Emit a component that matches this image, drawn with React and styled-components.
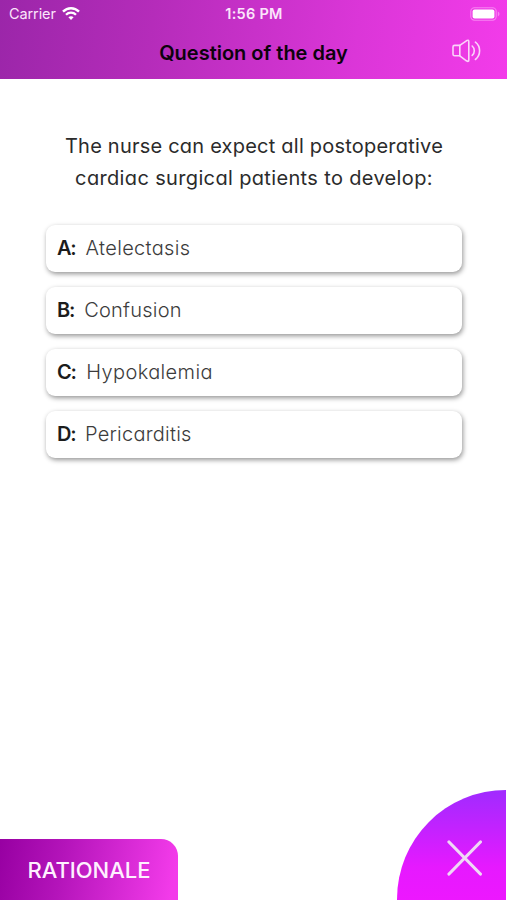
import React from "react";
import styled, { createGlobalStyle } from "styled-components";

const options = [
  { letter: "A", text: "Atelectasis", gap: 10, spacing: 0.34 },
  { letter: "B", text: "Confusion", gap: 10, spacing: 0.25 },
  { letter: "C", text: "Hypokalemia", gap: 10.5, spacing: 0.38 },
  { letter: "D", text: "Pericarditis", gap: 9.5, spacing: 0.24 },
];

const App = () => {
  return (
    <Screen>
      <GlobalStyle />
      <Header>
        <StatusBar>
          <Carrier>
            Carrier
            <WifiIcon />
          </Carrier>
          <Time>1:56 PM</Time>
          <BatteryIcon />
        </StatusBar>
        <NavBar>
          <Title>Question of the day</Title>
          <IconButton aria-label="Read aloud">
            <SpeakerIcon />
          </IconButton>
        </NavBar>
      </Header>
      <Main>
        <Question>
          <Line $spacing={0.22}>The nurse can expect all postoperative</Line>
          <Line $spacing={0.35}>cardiac surgical patients to develop:</Line>
        </Question>
        <Options>
          {options.map((option) => (
            <Option key={option.letter}>
              <Letter $gap={option.gap}>{option.letter}:</Letter>
              <Answer $spacing={option.spacing}>{option.text}</Answer>
            </Option>
          ))}
        </Options>
      </Main>
      <Footer>
        <RationaleButton>RATIONALE</RationaleButton>
        <CloseButton aria-label="Close">
          <svg width="36" height="36" viewBox="0 0 36 36">
            <path
              d="M2 2 33.4 34M33.4 2 2 34"
              stroke="#f0d8f6"
              strokeWidth="3.2"
              strokeLinecap="round"
            />
          </svg>
        </CloseButton>
      </Footer>
    </Screen>
  );
};

const WifiIcon = () => (
  <svg width="18" height="14" viewBox="0 0 18 14" fill="none" stroke="#fff">
    <path d="M1 4.7C5.5.1 12.5.1 17 4.7" strokeWidth="2.4" />
    <path d="M4 7.8c2.8-2.8 7.2-2.8 10 0" strokeWidth="2.3" />
    <path d="M6.4 10.2c1.5-1.4 3.7-1.4 5.2 0L9 13z" fill="#fff" stroke="none" />
  </svg>
);

const BatteryIcon = () => (
  <svg width="31" height="14" viewBox="0 0 31 14" fill="none">
    <rect x=".8" y=".8" width="25.4" height="12.4" rx="3.6" stroke="#f883f2" strokeWidth="1.1" />
    <rect x="2.6" y="2.4" width="21.8" height="9.2" rx="2" fill="#fff" />
    <path d="M27.8 4.6c2.2.8 2.2 4 0 4.8z" fill="#f883f2" />
  </svg>
);

const SpeakerIcon = () => (
  <svg
    width="30"
    height="24"
    viewBox="0 0 30 24"
    fill="none"
    stroke="#fbd3f9"
    strokeWidth="1.6"
    strokeLinecap="round"
    strokeLinejoin="round"
  >
    <path d="M8.8 6.4H3.6Q2 6.4 2 8v7.2q0 1.6 1.6 1.6h5.2z" />
    <path d="M8.8 6.4 15.4 1.8Q17.8.4 17.8 2.7v18.2q0 2.3-2.4.9L8.8 16.8" />
    <path d="M21.2 7c2.8 2.4 2.8 7 0 9.4M24.4 3.2c5.6 4.3 5.6 13 0 17.3" />
  </svg>
);

const GlobalStyle = createGlobalStyle`
  * {
    box-sizing: border-box;
  }
  body {
    margin: 0;
    background: #fff;
  }
  button {
    border: none;
    padding: 0;
    cursor: pointer;
  }
`;

const Screen = styled.div`
  display: flex;
  flex-direction: column;
  height: 900px;
  overflow: hidden;
  background: #fff;
  font-family: Inter, "Liberation Sans", sans-serif;
`;

const Header = styled.header`
  height: 79px;
  background: linear-gradient(97deg, #9b26a9 0%, #b52cba 30%, #db36d8 70%, #f33bea 100%);
`;

const StatusBar = styled.div`
  display: grid;
  grid-template-columns: 1fr auto 1fr;
  align-items: center;
  height: 27px;
  padding: 0 6px 0 9px;
  color: #fbe5fb;
  > svg {
    justify-self: end;
  }
`;

const Carrier = styled.div`
  display: flex;
  align-items: center;
  gap: 6px;
  font-size: 14.5px;
  letter-spacing: -0.1px;
`;

const Time = styled.div`
  margin-right: 2px;
  font-size: 14.5px;
  font-weight: 600;
  letter-spacing: 0.25px;
`;

const NavBar = styled.div`
  display: grid;
  grid-template-columns: 1fr auto 1fr;
  align-items: center;
  height: 51px;
  padding: 0 26px;
`;

const Title = styled.h1`
  grid-column: 2;
  margin: 0;
  color: #0d020d;
  font-size: 20px;
  font-weight: 600;
  letter-spacing: -0.01px;
  white-space: nowrap;
`;

const IconButton = styled.button`
  display: flex;
  justify-self: end;
  margin-top: -3px;
  background: none;
`;

const Main = styled.main`
  flex: 1;
  padding: 51px 45px 0 46px;
  font-feature-settings: "cv11";
`;

const Question = styled.p`
  margin: 0;
  color: #2b2b2b;
  font-size: 20px;
  line-height: 32px;
  text-align: center;
`;

const Line = styled.span`
  display: block;
  letter-spacing: ${(props) => props.$spacing}px;
  white-space: nowrap;
`;

const Options = styled.div`
  display: flex;
  flex-direction: column;
  gap: 15px;
  margin-top: 31px;
`;

const Option = styled.div`
  display: flex;
  align-items: center;
  height: 47px;
  padding: 0 0 1px 11px;
  border-radius: 9px;
  background: #fff;
  box-shadow: 1px 2px 5px rgba(0, 0, 0, 0.42);
  font-size: 20px;
`;

const Letter = styled.span`
  margin-right: ${(props) => props.$gap}px;
  color: #1c1c1c;
  font-weight: 600;
  letter-spacing: -1.2px;
`;

const Answer = styled.span`
  color: #3c3c3c;
  font-weight: 300;
  letter-spacing: ${(props) => props.$spacing}px;
`;

const Footer = styled.footer`
  display: flex;
  justify-content: space-between;
  align-items: flex-end;
  padding-right: 1px;
`;

const RationaleButton = styled.button`
  width: 178px;
  height: 61px;
  border-radius: 0 17px 0 0;
  background: linear-gradient(100deg, #9700a2 0%, #b414ba 35%, #f33bea 96%);
  color: #fff0ff;
  font-family: inherit;
  font-size: 22px;
  font-weight: 500;
`;

const CloseButton = styled.button`
  display: flex;
  width: 109px;
  height: 110px;
  padding: 50px 0 0 50px;
  border-radius: 109px 0 0 0;
  background: linear-gradient(#a02bff 0%, #e619ff 70%, #ed17ff 100%);
`;

export default App;
